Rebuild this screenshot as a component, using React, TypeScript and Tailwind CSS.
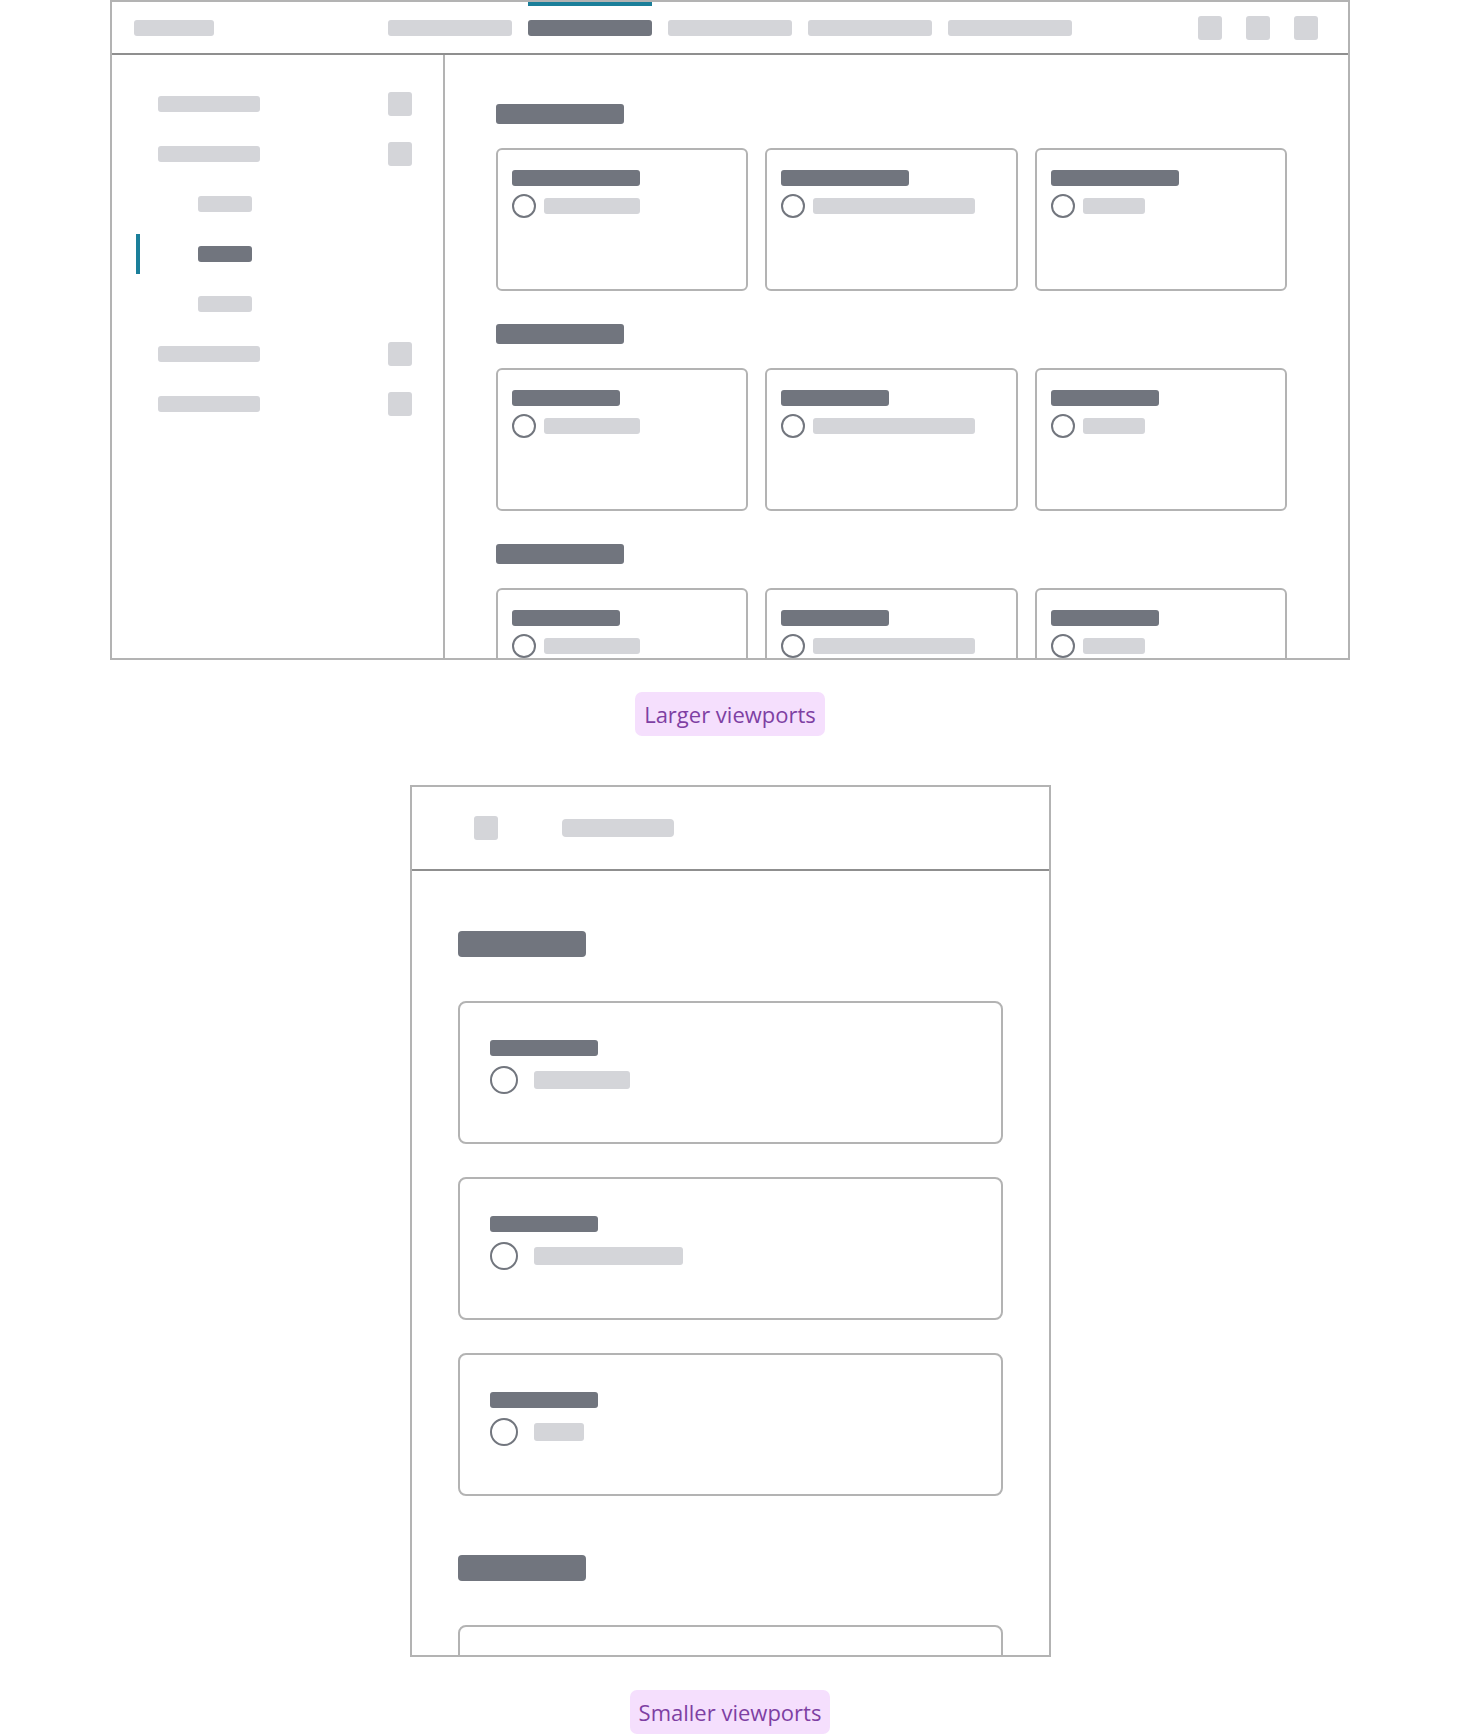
import React from "react";

// skeleton palette
const LIGHT = "bg-[#d4d5d9]";
const DARK = "bg-[#71757e]";

type CardData = { title: number; sub: number };

const desktopSections: CardData[][] = [
  [
    { title: 128, sub: 96 },
    { title: 128, sub: 162 },
    { title: 128, sub: 62 },
  ],
  [
    { title: 108, sub: 96 },
    { title: 108, sub: 162 },
    { title: 108, sub: 62 },
  ],
  [
    { title: 108, sub: 96 },
    { title: 108, sub: 162 },
    { title: 108, sub: 62 },
  ],
];

const mobileCards: CardData[] = [
  { title: 108, sub: 96 },
  { title: 108, sub: 149 },
  { title: 108, sub: 50 },
];

function Badge({ label }: { label: string }) {
  return (
    <div className="flex justify-center">
      <span className="inline-flex items-center h-[44px] px-[9px] rounded-[7px] bg-[#f5dffd] text-[#7e3fa3] text-[22px] leading-none font-['Open_Sans',sans-serif]">
        {label}
      </span>
    </div>
  );
}

function DesktopCard({ card }: { card: CardData }) {
  return (
    <div className="h-[143px] border-2 border-[#b3b3b3] rounded-[6px] pt-[20px] pl-[14px]">
      <div className={`h-[16px] rounded-[3px] ${DARK}`} style={{ width: card.title }} />
      <div className="mt-[8px] flex items-center gap-[8px]">
        <div className="w-[24px] h-[24px] rounded-full border-2 border-[#72767e]" />
        <div className={`h-[16px] rounded-[3px] ${LIGHT}`} style={{ width: card.sub }} />
      </div>
    </div>
  );
}

function MobileCard({ card }: { card: CardData }) {
  return (
    <div className="h-[143px] shrink-0 border-2 border-[#b3b3b3] rounded-[8px] pt-[37px] pl-[30px]">
      <div className={`h-[16px] rounded-[3px] ${DARK}`} style={{ width: card.title }} />
      <div className="mt-[10px] flex items-center">
        <div className="w-[28px] h-[28px] rounded-full border-2 border-[#72767e]" />
        <div className={`ml-[16px] h-[18px] rounded-[3px] ${LIGHT}`} style={{ width: card.sub }} />
      </div>
    </div>
  );
}

function SideRow({ withIcon = true }: { withIcon?: boolean }) {
  return (
    <div className="h-[50px] flex items-center justify-between pl-[46px] pr-[31px]">
      <div className={`w-[102px] h-[16px] rounded-[3px] ${LIGHT}`} />
      {withIcon && <div className={`w-[24px] h-[24px] rounded-[3px] ${LIGHT}`} />}
    </div>
  );
}

function SubRow({ active = false }: { active?: boolean }) {
  if (active) {
    return (
      <div className="h-[50px] flex items-center pl-[24px]">
        <div className="w-[4px] h-[40px] bg-[#1b7f9a]" />
        <div className={`ml-[58px] w-[54px] h-[16px] rounded-[3px] ${DARK}`} />
      </div>
    );
  }
  return (
    <div className="h-[50px] flex items-center pl-[86px]">
      <div className={`w-[54px] h-[16px] rounded-[3px] ${LIGHT}`} />
    </div>
  );
}

function DesktopLayout() {
  const nav = [false, true, false, false, false];
  return (
    <div className="mx-auto w-[1240px] h-[660px] border-2 border-[#b3b3b3] flex flex-col overflow-hidden">
      <header className="h-[53px] shrink-0 flex border-b-2 border-[#8f8f8f] pl-[22px] pr-[30px]">
        <div className={`self-center w-[80px] h-[16px] rounded-[3px] ${LIGHT}`} />
        <nav className="ml-[174px] flex gap-[16px]">
          {nav.map((active, i) => (
            <div key={i} className="w-[124px] flex flex-col">
              <div className={active ? "h-[4px] bg-[#1b7f9a]" : "h-[4px]"} />
              <div className={`mt-[14px] h-[16px] rounded-[3px] ${active ? DARK : LIGHT}`} />
            </div>
          ))}
        </nav>
        <div className="ml-auto flex items-center gap-[24px]">
          <div className={`w-[24px] h-[24px] rounded-[3px] ${LIGHT}`} />
          <div className={`w-[24px] h-[24px] rounded-[3px] ${LIGHT}`} />
          <div className={`w-[24px] h-[24px] rounded-[3px] ${LIGHT}`} />
        </div>
      </header>

      <div className="flex-1 min-h-0 flex">
        <aside className="w-[333px] shrink-0 border-r-2 border-[#b3b3b3] pt-[24px]">
          <SideRow />
          <SideRow />
          <SubRow />
          <SubRow active />
          <SubRow />
          <SideRow />
          <SideRow />
        </aside>

        <main className="flex-1 pl-[51px] pt-[49px] flex flex-col gap-[33px]">
          {desktopSections.map((cards, i) => (
            <section key={i}>
              <div className={`w-[128px] h-[20px] rounded-[3px] ${DARK}`} />
              <div className="mt-[24px] w-[791px] grid grid-cols-3 gap-x-[17px]">
                {cards.map((c, j) => (
                  <DesktopCard key={j} card={c} />
                ))}
              </div>
            </section>
          ))}
        </main>
      </div>
    </div>
  );
}

function MobileLayout() {
  return (
    <div className="mx-auto mt-[49px] w-[641px] h-[872px] border-2 border-[#b3b3b3] flex flex-col overflow-hidden">
      <header className="h-[84px] shrink-0 border-b-2 border-[#8f8f8f] flex items-center pl-[62px]">
        <div className={`w-[24px] h-[24px] rounded-[3px] ${LIGHT}`} />
        <div className={`ml-[64px] w-[112px] h-[18px] rounded-[4px] ${LIGHT}`} />
      </header>

      <div className="px-[46px] pt-[60px] flex flex-col">
        <div className={`w-[128px] h-[26px] rounded-[4px] ${DARK}`} />
        <div className="mt-[44px] flex flex-col gap-[33px]">
          {mobileCards.map((c, i) => (
            <MobileCard key={i} card={c} />
          ))}
        </div>
        <div className={`mt-[59px] w-[128px] h-[26px] rounded-[4px] ${DARK}`} />
        <div className="mt-[44px] flex flex-col">
          <MobileCard card={mobileCards[0]} />
        </div>
      </div>
    </div>
  );
}

export default function App() {
  return (
    <div className="w-full min-h-[1734px] bg-white flex flex-col">
      <DesktopLayout />
      <div className="mt-[32px]">
        <Badge label="Larger viewports" />
      </div>
      <MobileLayout />
      <div className="mt-[33px]">
        <Badge label="Smaller viewports" />
      </div>
    </div>
  );
}
